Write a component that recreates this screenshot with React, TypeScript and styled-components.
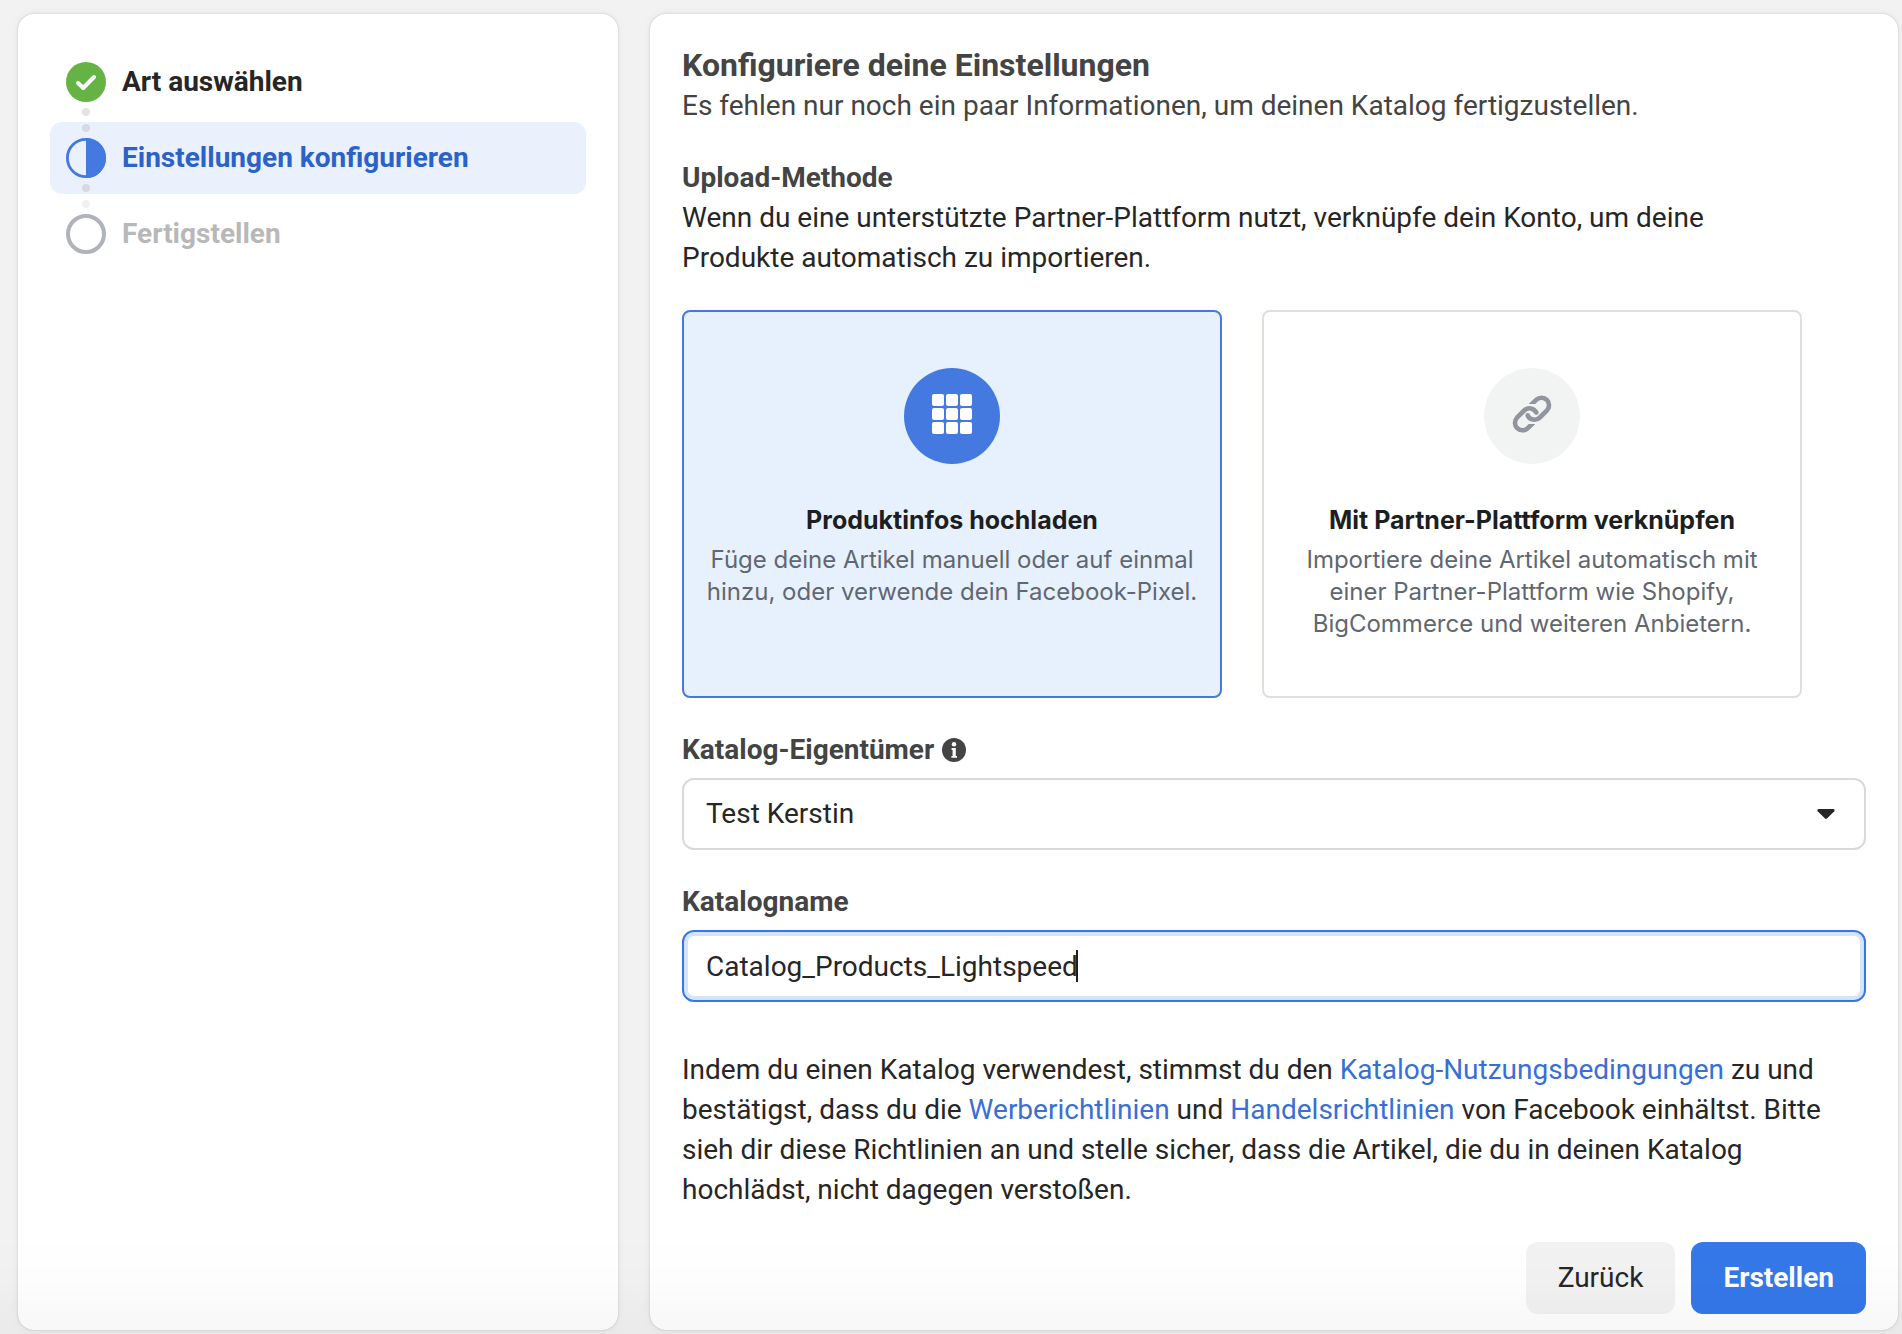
import React, { useLayoutEffect, useRef, useState } from "react";
import styled, { createGlobalStyle, css } from "styled-components";

const roboto = `Roboto, "Liberation Sans", sans-serif`;
const inter = `Inter, "Liberation Sans", sans-serif`;

const GlobalStyle = createGlobalStyle`
  *, *::before, *::after { box-sizing: border-box; }
  html, body, #root { height: 100%; }
  body { margin: 0; background: #f2f2f2; color: #262626; font: 400 28px/40px ${roboto}; }
  h1, h2, p, ol { margin: 0; padding: 0; }
`;

const Page = styled.div`
  min-height: 100%;
  display: grid;
  grid-template-columns: 600px minmax(0, 1fr);
  gap: 32px;
  padding: 14px 4px 4px 18px;
`;

const BottomShade = styled.div`
  position: fixed;
  inset: auto 0 0 0;
  height: 100px;
  pointer-events: none;
  background: linear-gradient(rgba(0, 0, 0, 0), rgba(0, 0, 0, 0.006) 45%, rgba(0, 0, 0, 0.03));
`;

const Panel = styled.section`
  background: #fff;
  border-radius: 16px;
  box-shadow: 0 0 2px rgba(0, 0, 0, 0.2), 0 0 10px rgba(0, 0, 0, 0.06);
`;

const StepsPanel = styled(Panel)`
  padding: 32px;
`;

const FormPanel = styled(Panel)`
  display: flex;
  flex-direction: column;
  padding: 32px 32px 16px;
`;

const StepList = styled.ol`
  list-style: none;
  display: flex;
  flex-direction: column;
  gap: 4px;
`;

type StepState = "done" | "current" | "open";

const stepColor = { done: "#262626", current: "#2a62c9", open: "#b8b8b8" };

const Step = styled.li<{ $state: StepState }>`
  position: relative;
  display: flex;
  align-items: center;
  gap: 16px;
  height: 72px;
  padding: 0 16px;
  border-radius: 12px;
  font-weight: 700;
  color: ${(p) => stepColor[p.$state]};
  background: ${(p) => (p.$state === "current" ? "#eaf1fd" : "transparent")};
`;

const Connector = styled.span<{ $fade?: boolean }>`
  position: absolute;
  z-index: 1;
  left: 32px;
  top: 62px;
  width: 8px;
  height: 24px;
  display: flex;
  flex-direction: column;
  justify-content: space-between;
  &::before, &::after {
    content: "";
    width: 8px;
    height: 8px;
    border-radius: 50%;
    background: ${(p) => (p.$fade ? "#d5dae4" : "#e4e4e4")};
  }
  &::after { background: ${(p) => (p.$fade ? "#f1f1f1" : "#d5dae4")}; }
`;

const Title = styled.h1`
  font-size: 32px;
  line-height: 38px;
  font-weight: 700;
  color: #444;
`;

const Subtitle = styled.p`
  margin-top: 2px;
  color: #444;
`;

const Method = styled.section`
  max-width: 1120px;
  margin-top: 32px;
`;

const SectionTitle = styled.h2`
  font-size: 28px;
  line-height: 40px;
  font-weight: 700;
  color: #444;
`;

const Cards = styled.div`
  display: grid;
  grid-template-columns: 1fr 1fr;
  gap: 40px;
  margin-top: 32px;
`;

const Card = styled.button<{ $selected?: boolean }>`
  display: flex;
  flex-direction: column;
  align-items: center;
  min-height: 388px;
  padding: 56px 16px;
  border: 2px solid ${(p) => (p.$selected ? "#4479df" : "#dddfe4")};
  border-radius: 8px;
  background: ${(p) => (p.$selected ? "#e7f1fe" : "#fff")};
  text-align: center;
  cursor: pointer;
`;

const Disc = styled.span<{ $selected?: boolean }>`
  display: grid;
  justify-content: center;
  width: 96px;
  height: 96px;
  padding-top: 26px;
  border-radius: 50%;
  background: ${(p) => (p.$selected ? "#4479df" : "#f2f4f4")};
`;

const CardTitle = styled.span`
  margin-top: 36px;
  font: 700 25px/40px ${inter};
  color: #1c1e21;
`;

const CardText = styled.span`
  margin-top: 4px;
  font: 400 24px/32px ${inter};
  color: #606770;
`;

const Field = styled.div`
  display: flex;
  flex-direction: column;
  gap: 8px;
  margin-top: 32px;
`;

const LabelRow = styled.div`
  display: flex;
  align-items: center;
  gap: 8px;
`;

const Label = styled.label`
  font-weight: 700;
  color: #444;
`;

const ControlWrap = styled.div`
  position: relative;
  display: flex;
  svg {
    position: absolute;
    right: 30px;
    top: 30px;
    pointer-events: none;
  }
`;

const control = css`
  width: 100%;
  height: 72px;
  padding: 0 22px;
  border: 2px solid #d9d9d9;
  border-radius: 12px;
  background: #fff;
  color: #262626;
  font: 400 28px/40px ${roboto};
  outline: none;
`;

const Select = styled.select`
  ${control}
  appearance: none;
`;

const TextInput = styled.input`
  ${control}
  border-color: #3578e5;
  box-shadow: inset 0 0 0 4px #d7e3fb;
  caret-color: transparent;
`;

const Caret = styled.span`
  position: absolute;
  top: 20px;
  width: 2px;
  height: 32px;
  background: #1c1e21;
`;

const Terms = styled.p`
  margin-top: 48px;
`;

const Link = styled.a`
  color: #386fd6;
  text-decoration: none;
`;

const Actions = styled.div`
  display: flex;
  justify-content: flex-end;
  gap: 16px;
  margin-top: 32px;
`;

const Button = styled.button<{ $primary?: boolean }>`
  height: 72px;
  padding: 0 32px;
  border: 0;
  border-radius: 12px;
  background: ${(p) => (p.$primary ? "#3578e9" : "#f2f2f2")};
  color: ${(p) => (p.$primary ? "#fff" : "#262626")};
  font: ${(p) => (p.$primary ? 700 : 400)} 28px/40px ${roboto};
  cursor: pointer;
`;

const StepIcon = ({ state }: { state: StepState }) => (
  <svg width="40" height="40" viewBox="0 0 40 40" fill="none" aria-hidden="true">
    {state === "done" && (
      <>
        <circle cx="20" cy="20" r="20" fill="#65b344" />
        <path d="M12 21l5.200 5L28 15" stroke="#fff" strokeWidth="4" strokeLinecap="round" strokeLinejoin="round" />
      </>
    )}
    {state === "current" && (
      <>
        <circle cx="20" cy="20" r="18.600" stroke="#4479df" strokeWidth="2.800" />
        <path d="M20 0a20 20 0 0 1 0 40z" fill="#4479df" />
      </>
    )}
    {state === "open" && <circle cx="20" cy="20" r="18" stroke="#b0b3ba" strokeWidth="4" fill="#fff" />}
  </svg>
);

const GridIcon = () => (
  <svg width="40" height="40" viewBox="0 0 40 40" fill="#fff" aria-hidden="true">
    {[0, 14, 28].map((y) =>
      [0, 14, 28].map((x) => <rect key={`${x}-${y}`} x={x} y={y} width="12" height="12" rx="2" />)
    )}
  </svg>
);

const chainLink = "M21.500 28.500L15.600 34.300A7.500 7.500 0 0 1 5 23.700L12.200 16.500A7.500 7.500 0 0 1 24.300 18.600";

const ChainIcon = () => (
  <svg width="40" height="40" viewBox="0 0 40 40" aria-hidden="true">
    <defs>
      <clipPath id="link-cut">
        <path d="M0 0H40V24H17L13 30H40V40H0z" />
      </clipPath>
    </defs>
    {[0, 180].map((angle) => (
      <g key={angle} transform={`rotate(${angle} 20 20)`} clipPath="url(#link-cut)">
        <path d={chainLink} fill="none" stroke="#92949e" strokeWidth="4.600" />
        <circle cx="24.300" cy="18.600" r="2.300" fill="#92949e" />
      </g>
    ))}
  </svg>
);

const InfoIcon = () => (
  <svg width="24" height="24" viewBox="0 0 24 24" aria-hidden="true">
    <circle cx="12" cy="12" r="12" fill="#444" />
    <circle cx="12" cy="6.200" r="2.200" fill="#fff" />
    <path d="M9.600 10h4.200v8h1.200v1.800H9.400V18h1.200v-6H9.600z" fill="#fff" />
  </svg>
);

const Triangle = () => (
  <svg width="20" height="12" viewBox="0 0 20 12" aria-hidden="true">
    <path d="M2.500 1h15q2 .6 .8 2.200L11 10.600q-1 .8-2 0L1.700 3.200Q.5 1.600 2.500 1z" fill="#262626" />
  </svg>
);

const steps: { label: string; state: StepState }[] = [
  { label: "Art auswählen", state: "done" },
  { label: "Einstellungen konfigurieren", state: "current" },
  { label: "Fertigstellen", state: "open" },
];

export default function App() {
  const [name, setName] = useState("Catalog_Products_Lightspeed");
  const [method, setMethod] = useState("upload");
  const [caretX, setCaretX] = useState(24);
  const inputRef = useRef<HTMLInputElement>(null);

  useLayoutEffect(() => {
    const ctx = document.createElement("canvas").getContext("2d");
    if (!ctx || !inputRef.current) return;
    ctx.font = getComputedStyle(inputRef.current).font;
    setCaretX(23 + Math.floor(ctx.measureText(name).width));
  }, [name]);

  return (
    <>
      <GlobalStyle />
      <Page>
        <StepsPanel>
          <StepList>
            {steps.map((s, i) => (
              <Step key={s.label} $state={s.state} aria-current={s.state === "current" ? "step" : undefined}>
                <StepIcon state={s.state} />
                {s.label}
                {i < steps.length - 1 && <Connector $fade={i > 0} />}
              </Step>
            ))}
          </StepList>
        </StepsPanel>

        <FormPanel>
          <Title>Konfiguriere deine Einstellungen</Title>
          <Subtitle>Es fehlen nur noch ein paar Informationen, um deinen Katalog fertigzustellen.</Subtitle>

          <Method>
            <SectionTitle>Upload-Methode</SectionTitle>
            <p>
              Wenn du eine unterstützte Partner-Plattform nutzt, verknüpfe dein Konto, um deine Produkte automatisch zu
              importieren.
            </p>
            <Cards>
              <Card
                type="button"
                $selected={method === "upload"}
                aria-pressed={method === "upload"}
                onClick={() => setMethod("upload")}
              >
                <Disc $selected={method === "upload"}>
                  <GridIcon />
                </Disc>
                <CardTitle>Produktinfos hochladen</CardTitle>
                <CardText>Füge deine Artikel manuell oder auf einmal hinzu, oder verwende dein Facebook-Pixel.</CardText>
              </Card>
              <Card
                type="button"
                $selected={method === "partner"}
                aria-pressed={method === "partner"}
                onClick={() => setMethod("partner")}
              >
                <Disc $selected={method === "partner"}>
                  <ChainIcon />
                </Disc>
                <CardTitle>Mit Partner-Plattform verknüpfen</CardTitle>
                <CardText>
                  Importiere deine Artikel automatisch mit einer Partner-Plattform wie Shopify, BigCommerce und weiteren
                  Anbietern.
                </CardText>
              </Card>
            </Cards>
          </Method>

          <Field>
            <LabelRow>
              <Label htmlFor="owner">Katalog-Eigentümer</Label>
              <InfoIcon />
            </LabelRow>
            <ControlWrap>
              <Select id="owner" defaultValue="kerstin">
                <option value="kerstin">Test Kerstin</option>
              </Select>
              <Triangle />
            </ControlWrap>
          </Field>

          <Field>
            <Label htmlFor="catalog-name">Katalogname</Label>
            <ControlWrap>
              <TextInput
                id="catalog-name"
                ref={inputRef}
                type="text"
                value={name}
                onChange={(e) => setName(e.target.value)}
              />
              <Caret style={{ left: caretX }} />
            </ControlWrap>
          </Field>

          <Terms>
            Indem du einen Katalog verwendest, stimmst du den <Link href="#nutzung">Katalog-Nutzungsbedingungen</Link> zu
            und bestätigst, dass du die <Link href="#werbung">Werberichtlinien</Link> und{" "}
            <Link href="#handel">Handelsrichtlinien</Link> von Facebook einhältst. Bitte sieh dir diese Richtlinien an
            und stelle sicher, dass die Artikel, die du in deinen Katalog hochlädst, nicht dagegen verstoßen.
          </Terms>

          <Actions>
            <Button type="button">Zurück</Button>
            <Button type="button" $primary>
              Erstellen
            </Button>
          </Actions>
        </FormPanel>
      </Page>
      <BottomShade />
    </>
  );
}
